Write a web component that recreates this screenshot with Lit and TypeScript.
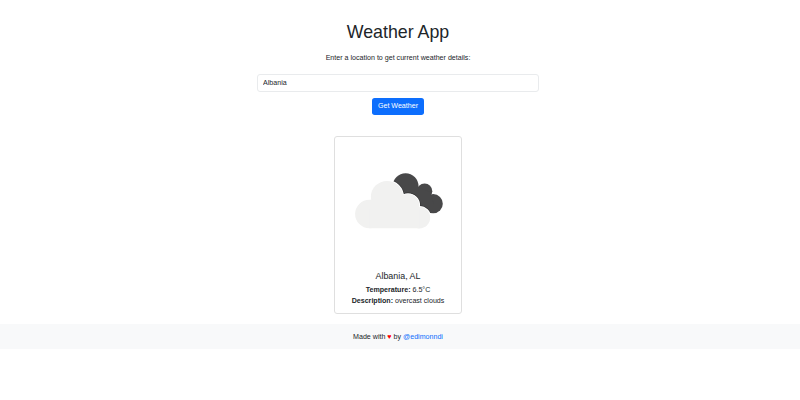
import { LitElement, html, css, svg } from "lit";
import { customElement, property } from "lit/decorators.js";

@customElement("overcast-icon")
class OvercastIcon extends LitElement {
  static styles = css`
    :host { display: block; }
    svg { display: block; width: 126px; height: 126px; }
    .dark { fill: #484849; }
    .shade { fill: #333334; stroke: #333334; stroke-width: 3; }
    .edge { fill: #fff; stroke: #fff; stroke-width: 1.8; }
    .light { fill: #f1f1f0; }
  `;
  render() {
    const dark = svg`
      <circle cx="405.6" cy="186.2" r="12.9"></circle>
      <circle cx="424.6" cy="191.3" r="7.7"></circle>
      <circle cx="433.2" cy="203.7" r="9.6"></circle>
      <path d="M405 186L414 183L420 188L430 192L434 205L430 213L402 200Z"></path>`;
    const cloud = svg`
      <circle cx="369.4" cy="214" r="14.3"></circle>
      <circle cx="387" cy="197" r="16.1"></circle>
      <circle cx="408" cy="205.3" r="11.2"></circle>
      <circle cx="419.4" cy="217.6" r="10.8"></circle>
      <path d="M369.4 200L387 197L408 203L419.4 209V228.3H369.4Z"></path>`;
    return html`<svg viewBox="335 137 126 126">
      <defs><clipPath id="back">${dark}</clipPath></defs>
      <g class="dark">${dark}</g>
      <g class="shade" clip-path="url(#back)">${cloud}</g>
      <g class="edge">${cloud}</g>
      <g class="light">${cloud}</g>
    </svg>`;
  }
}

@customElement("weather-card")
class WeatherCard extends LitElement {
  @property() place = "";
  @property() temperature = "";
  @property() description = "";
  static styles = css`
    :host {
      display: block;
      box-sizing: border-box;
      width: 128px;
      height: 178px;
      border: 1px solid #dfdfdf;
      border-radius: 3px;
      text-align: center;
      background: #fff;
    }
    .name { margin: 8px 0 0; font-size: 8.9px; line-height: 11px; font-weight: 400; }
    .line { margin: 0; font-size: 7.1px; line-height: 10.7px; }
    .first { margin-top: 3px; }
  `;
  render() {
    return html`
      <overcast-icon></overcast-icon>
      <h2 class="name">${this.place}</h2>
      <p class="line first"><b>Temperature:</b> ${this.temperature}</p>
      <p class="line"><b>Description:</b> ${this.description}</p>
    `;
  }
}

@customElement("app-root")
class AppRoot extends LitElement {
  static styles = css`
    :host {
      display: block;
      height: 400px;
      overflow: hidden;
      background: #fff;
      color: #212529;
      font: 7.1px/10.7px "Liberation Sans", Arial, sans-serif;
    }
    main {
      display: flex;
      flex-direction: column;
      align-items: center;
      box-sizing: border-box;
      width: 796px;
      height: 324px;
      padding-top: 21px;
    }
    h1 { margin: 0; font-size: 17.8px; line-height: 22px; font-weight: 400; }
    .hint { margin: 10.3px 0 10px; }
    input {
      box-sizing: border-box;
      width: 282px;
      height: 18px;
      padding: 0 5px;
      border: 1px solid #e9ebed;
      border-radius: 3px;
      color: inherit;
      background: #fff;
      font: inherit;
      outline: none;
    }
    button {
      width: 52px;
      height: 17px;
      margin: 6px 0 21px;
      padding: 0;
      border: 0;
      border-radius: 2.7px;
      background: #0d6efd;
      color: #fff;
      font: inherit;
    }
    footer {
      box-sizing: border-box;
      height: 25px;
      padding: 8px 4px 0 0;
      background: #f8f9fa;
      text-align: center;
    }
    .heart { color: #f00; }
    a { color: #0d6efd; text-decoration: none; }
  `;
  render() {
    return html`
      <main>
        <h1>Weather App</h1>
        <p class="hint">Enter a location to get current weather details:</p>
        <input type="text" .value=${"Albania"} />
        <button>Get Weather</button>
        <weather-card place="Albania, AL" temperature="6.5°C" description="overcast clouds"></weather-card>
      </main>
      <footer>Made with <span class="heart">♥</span> by <a>@edimonndi</a></footer>
    `;
  }
}
